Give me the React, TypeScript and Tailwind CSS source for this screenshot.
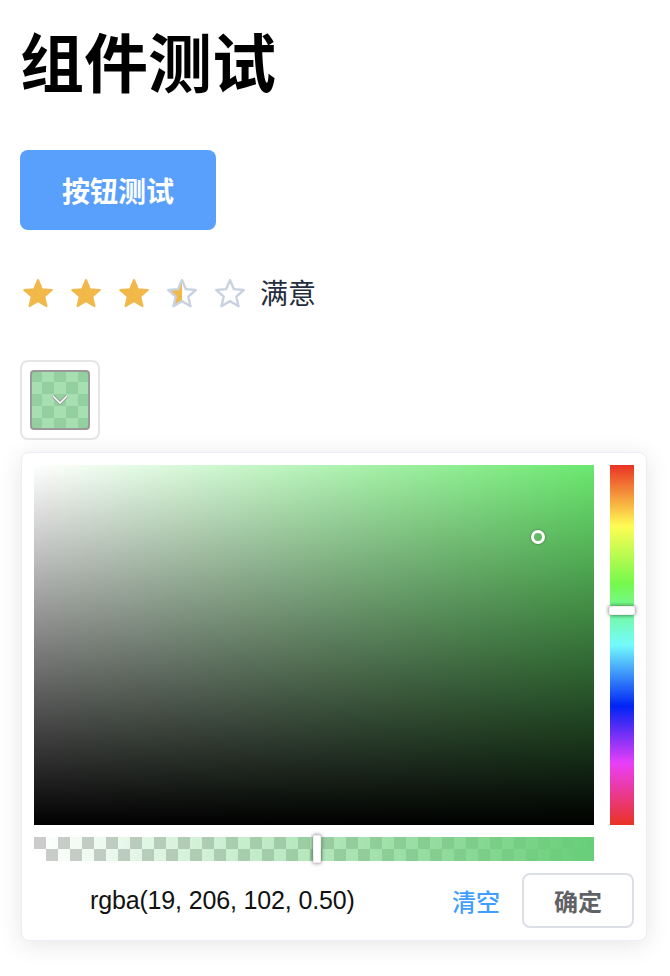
import React from "react";

const STAR = "18,4 21.88,13.16 31.79,14.02 24.28,20.54 26.52,30.23 18,25.1 9.48,30.23 11.72,20.54 4.21,14.02 14.12,13.16";

function Star({ kind }: { kind: "full" | "half" | "empty" }) {
  return (
    <svg width="36" height="36" viewBox="0 0 36 36" className="mr-[12px] shrink-0">
      <defs>
        <clipPath id="halfclip">
          <rect x="0" y="0" width="18" height="36" />
        </clipPath>
      </defs>
      {kind === "full" && (
        <polygon points={STAR} fill="#f1b94a" stroke="#f1b94a" strokeWidth="2" strokeLinejoin="round" />
      )}
      {kind === "half" && (
        <>
          <polygon points={STAR} fill="#f1b94a" clipPath="url(#halfclip)" />
          <polygon points={STAR} fill="none" stroke="#c9d3e0" strokeWidth="2.4" strokeLinejoin="round" />
        </>
      )}
      {kind === "empty" && (
        <polygon points={STAR} fill="none" stroke="#c9d3e0" strokeWidth="2.4" strokeLinejoin="round" />
      )}
    </svg>
  );
}

export default function App() {
  return (
    <div className="w-[670px] h-[976px] bg-white overflow-hidden px-[20px] flex flex-col items-start font-['Liberation_Sans','Noto_Sans_CJK_SC',sans-serif]">
      <h1 className="mt-[24px] text-[64px] leading-[70px] font-bold text-black font-['Noto_Sans_CJK_SC',sans-serif]">
        组件测试
      </h1>

      <button className="mt-[56px] w-[196px] h-[80px] rounded-[8px] bg-[#58a0fb] text-white text-[28px] font-bold font-['Noto_Sans_CJK_SC',sans-serif] flex items-center justify-center">
        按钮测试
      </button>

      <div className="mt-[46px] h-[36px] flex items-center">
        <Star kind="full" />
        <Star kind="full" />
        <Star kind="full" />
        <Star kind="half" />
        <Star kind="empty" />
        <span className="text-[28px] leading-[32px] mb-[4px] text-[#1f2d3d] font-['Noto_Sans_CJK_SC',sans-serif]">满意</span>
      </div>

      <div className="mt-[48px] w-[80px] h-[80px] border-2 border-[#e6e6e6] rounded-[8px] p-[8px]">
        <div className="relative w-[60px] h-[60px] border-2 border-[#999] rounded-[4px] overflow-hidden bg-[image:conic-gradient(#a8dfb0_25%,#94d09f_0_50%,#a8dfb0_0_75%,#94d09f_0)] bg-[length:24px_24px] bg-[position:-2px_-2px] flex items-center justify-center">
          <svg width="20" height="14" viewBox="0 0 20 14">
            <polyline points="3,3 10,10 17,3" fill="none" stroke="#8a8a8a" strokeWidth="3" />
            <polyline points="3,3 10,10 17,3" fill="none" stroke="#ffffff" strokeWidth="1.6" />
          </svg>
        </div>
      </div>

      <div className="mt-[12px] ml-[1px] w-[626px] border border-[#ebeef5] rounded-[8px] bg-white shadow-[0_4px_24px_rgba(0,0,0,0.1)] p-[12px]">
        <div className="flex gap-[16px]">
          <div className="relative w-[560px] h-[360px] bg-[#6be86f]">
            <div className="absolute inset-0 bg-[linear-gradient(to_right,#ffffff,rgba(255,255,255,0))]" />
            <div className="absolute inset-0 bg-[linear-gradient(to_top,#000000,rgba(0,0,0,0))]" />
            <div className="absolute left-[497px] top-[65px] w-[14px] h-[14px] rounded-full border-[3px] border-white shadow-[0_0_2px_rgba(0,0,0,0.6)]" />
          </div>
          <div className="relative w-[24px] h-[360px] bg-[linear-gradient(to_bottom,#ea3323_0%,#fffd54_17%,#75f94d_33%,#74fbfd_50%,#0023f5_67%,#ea3ff7_83%,#ea3323_100%)]">
            <div className="absolute left-[-1px] top-[141px] w-[26px] h-[9px] rounded-[2px] bg-white border border-[#f0f0f0] shadow-[0_0_4px_rgba(0,0,0,0.6)]" />
          </div>
        </div>

        <div className="relative mt-[12px] w-[560px] h-[24px] bg-[image:conic-gradient(#ffffff_25%,#cccccc_0_50%,#ffffff_0_75%,#cccccc_0)] bg-[length:24px_24px]">
          <div className="absolute inset-0 bg-[linear-gradient(to_right,rgba(104,206,120,0),rgba(104,206,120,1))]" />
          <div className="absolute left-[279px] top-[-2px] w-[8px] h-[28px] rounded-[2px] bg-white border border-[#f0f0f0] shadow-[0_0_4px_rgba(0,0,0,0.6)]" />
        </div>

        <div className="mt-[12px] h-[55px] flex items-center">
          <span className="pl-[56px] text-[25px] tracking-[-0.15px] text-[#111] font-['Liberation_Sans',sans-serif]">rgba(19, 206, 102, 0.50)</span>
          <span className="ml-auto text-[24px] font-medium text-[#409eff] font-['Noto_Sans_CJK_SC',sans-serif]">清空</span>
          <button className="ml-[22px] w-[112px] h-[55px] border-2 border-[#dcdfe6] rounded-[8px] bg-white text-[24px] font-bold text-[#606266] font-['Noto_Sans_CJK_SC',sans-serif] flex items-center justify-center">
            确定
          </button>
        </div>
      </div>
    </div>
  );
}
